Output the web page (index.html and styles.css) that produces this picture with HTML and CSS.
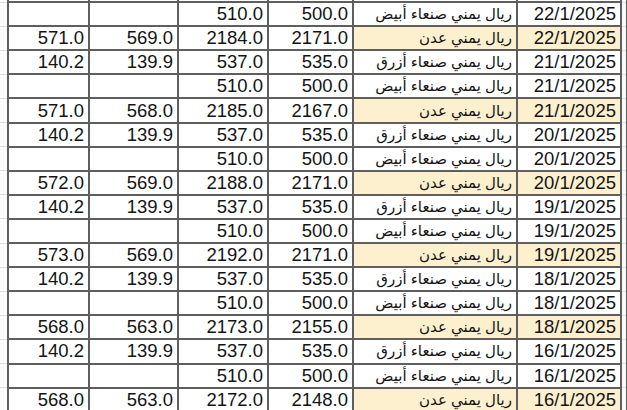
FILE: index.html
```html
<!DOCTYPE html>
<html lang="ar">
<head>
<meta charset="utf-8">
<title>أسعار الصرف</title>
<link rel="stylesheet" href="styles.css">
</head>
<body>
<table class="grid">
<colgroup>
<col class="g"><col class="c1"><col class="c2"><col class="c3"><col class="c4"><col class="c5"><col class="c6"><col class="g2">
</colgroup>
<tbody>
<tr class="cut"><td class="gut"></td><td></td><td></td><td></td><td></td><td></td><td></td><td class="gut"></td></tr>
<tr><td class="gut"></td><td></td><td></td><td>510.0</td><td>500.0</td><td class="name">ريال يمني صنعاء أبيض</td><td>22/1/2025</td><td class="gut"></td></tr>
<tr class="aden"><td class="gut"></td><td>571.0</td><td>569.0</td><td>2184.0</td><td>2171.0</td><td class="name">ريال يمني عدن</td><td class="hl">22/1/2025</td><td class="gut"></td></tr>
<tr><td class="gut"></td><td>140.2</td><td>139.9</td><td>537.0</td><td>535.0</td><td class="name">ريال يمني صنعاء أزرق</td><td>21/1/2025</td><td class="gut"></td></tr>
<tr><td class="gut"></td><td></td><td></td><td>510.0</td><td>500.0</td><td class="name">ريال يمني صنعاء أبيض</td><td>21/1/2025</td><td class="gut"></td></tr>
<tr class="aden"><td class="gut"></td><td>571.0</td><td>568.0</td><td>2185.0</td><td>2167.0</td><td class="name">ريال يمني عدن</td><td class="hl">21/1/2025</td><td class="gut"></td></tr>
<tr><td class="gut"></td><td>140.2</td><td>139.9</td><td>537.0</td><td>535.0</td><td class="name">ريال يمني صنعاء أزرق</td><td>20/1/2025</td><td class="gut"></td></tr>
<tr><td class="gut"></td><td></td><td></td><td>510.0</td><td>500.0</td><td class="name">ريال يمني صنعاء أبيض</td><td>20/1/2025</td><td class="gut"></td></tr>
<tr class="aden"><td class="gut"></td><td>572.0</td><td>569.0</td><td>2188.0</td><td>2171.0</td><td class="name">ريال يمني عدن</td><td class="hl">20/1/2025</td><td class="gut"></td></tr>
<tr><td class="gut"></td><td>140.2</td><td>139.9</td><td>537.0</td><td>535.0</td><td class="name">ريال يمني صنعاء أزرق</td><td>19/1/2025</td><td class="gut"></td></tr>
<tr><td class="gut"></td><td></td><td></td><td>510.0</td><td>500.0</td><td class="name">ريال يمني صنعاء أبيض</td><td>19/1/2025</td><td class="gut"></td></tr>
<tr class="aden"><td class="gut"></td><td>573.0</td><td>569.0</td><td>2192.0</td><td>2171.0</td><td class="name">ريال يمني عدن</td><td class="hl">19/1/2025</td><td class="gut"></td></tr>
<tr><td class="gut"></td><td>140.2</td><td>139.9</td><td>537.0</td><td>535.0</td><td class="name">ريال يمني صنعاء أزرق</td><td>18/1/2025</td><td class="gut"></td></tr>
<tr><td class="gut"></td><td></td><td></td><td>510.0</td><td>500.0</td><td class="name">ريال يمني صنعاء أبيض</td><td>18/1/2025</td><td class="gut"></td></tr>
<tr class="aden"><td class="gut"></td><td>568.0</td><td>563.0</td><td>2173.0</td><td>2155.0</td><td class="name">ريال يمني عدن</td><td class="hl">18/1/2025</td><td class="gut"></td></tr>
<tr><td class="gut"></td><td>140.2</td><td>139.9</td><td>537.0</td><td>535.0</td><td class="name">ريال يمني صنعاء أزرق</td><td>16/1/2025</td><td class="gut"></td></tr>
<tr><td class="gut"></td><td></td><td></td><td>510.0</td><td>500.0</td><td class="name">ريال يمني صنعاء أبيض</td><td>16/1/2025</td><td class="gut"></td></tr>
<tr class="aden"><td class="gut"></td><td>568.0</td><td>563.0</td><td>2172.0</td><td>2148.0</td><td class="name">ريال يمني عدن</td><td class="hl">16/1/2025</td><td class="gut"></td></tr>
</tbody>
</table>
</body>
</html>
```

FILE: styles.css
```css
html, body {
  margin: 0;
  padding: 0;
}
body {
  width: 627px;
  height: 410px;
  overflow: hidden;
  background: #ffffff;
  font-family: "Liberation Sans", "DejaVu Sans", sans-serif;
  color: #141414;
}
.grid {
  margin-top: -23px;
  border-collapse: collapse;
  table-layout: fixed;
  width: 627px;
}
.g { width: 8px; }
.c1 { width: 81px; }
.c2 { width: 89px; }
.c3 { width: 90px; }
.c4 { width: 85px; }
.c5 { width: 164px; }
.c6 { width: 104px; }
.g2 { width: 6px; }
.grid td {
  border: 2px solid #5e5e5e;
  height: 22.1px;
  padding: 0 4px 0 0;
  font-size: 18.5px;
  line-height: 22px;
  text-align: right;
  white-space: nowrap;
  background: #ffffff;
}
.grid td.gut {
  border-top: 1px solid #dedede;
  border-bottom: 1px solid #dedede;
  border-left: 0;
  padding: 0;
  background: #fafafa;
}
.grid td.name {
  direction: rtl;
  text-align: right;
  padding: 0 4px 0 0;
  font-size: 15px;
}
.grid tr.aden td.name,
.grid td.hl {
  background: #fcf0cf;
}
```
